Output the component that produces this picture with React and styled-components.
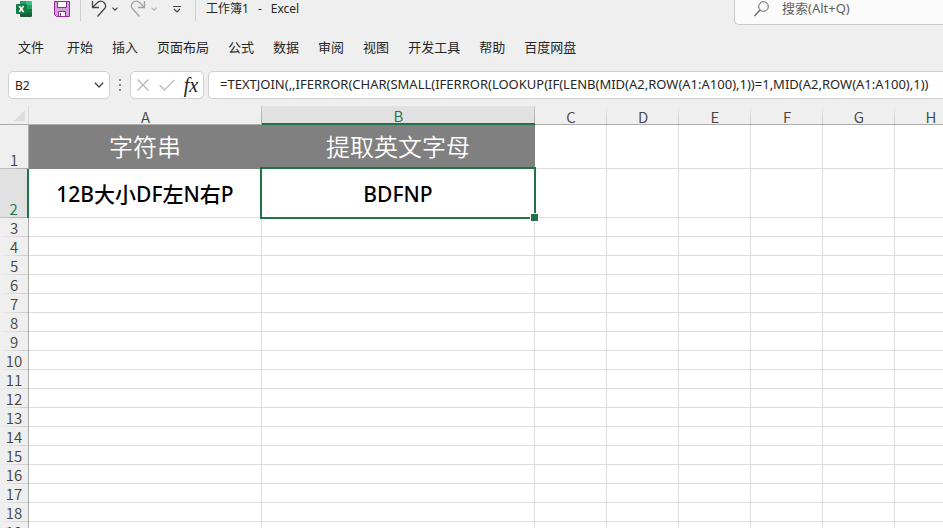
import React, { useState } from "react";
import styled, { createGlobalStyle } from "styled-components";

const GlobalStyle = createGlobalStyle`
  * {
    box-sizing: border-box;
  }
  body {
    margin: 0;
    background: #efefef;
    color: #262626;
    font-family: "Noto Sans", "Noto Sans CJK SC", sans-serif;
    font-size: 13px;
  }
  button,
  input {
    margin: 0;
    padding: 0;
    border: 0;
    background: none;
    color: inherit;
    font: inherit;
    outline: none;
  }
`;

const Page = styled.div`
  display: flex;
  flex-direction: column;
  height: 100vh;
  overflow: hidden;
`;

const TitleBar = styled.header`
  display: flex;
  height: 25px;
  padding-left: 16px;
`;

const QuickAccess = styled.div`
  display: flex;
  align-items: center;
  gap: ${(props) => props.$gap || 0}px;
  height: 18px;
`;

const IconButton = styled.button`
  display: flex;
  align-items: center;
  justify-content: center;
  width: ${(props) => props.$width}px;
  height: 18px;
  color: ${(props) => props.$color || "#444"};
`;

const Divider = styled.span`
  align-self: flex-start;
  width: 1px;
  height: 21px;
  background: #cfcfcf;
`;

const BookTitle = styled.h1`
  display: flex;
  gap: 9px;
  margin: 0 0 0 3px;
  font-size: 12px;
  font-weight: 400;
  line-height: 18px;
  white-space: nowrap;
`;

const Search = styled.label`
  display: flex;
  align-items: flex-start;
  width: 22%;
  min-width: 209px;
  margin-left: auto;
  padding-left: 19px;
  border: 1px solid #c8c8c8;
  border-width: 0 0 1px 1px;
  border-bottom-left-radius: 5px;
  background: #fbfbfb;
  color: #616161;

  & svg {
    margin-top: 1px;
  }
  & input {
    flex: 1;
    min-width: 0;
    height: 16px;
    margin-left: 12px;
  }
  & input::placeholder {
    color: #616161;
    opacity: 1;
  }
`;

const Menu = styled.nav`
  display: flex;
  gap: 19px;
  padding: 12px 18px 0;
  height: 46px;
`;

const MenuItem = styled.button`
  height: 20px;
  line-height: 20px;
  white-space: nowrap;

  &:first-child {
    margin-right: 4px;
  }
`;

const FormulaBar = styled.div`
  display: flex;
  height: 28px;
  padding-left: 8px;
`;

const Box = styled.div`
  display: flex;
  align-items: center;
  border: 1px solid #d0d0d0;
  border-radius: 5px;
  background: #fff;
`;

const NameBox = styled(Box)`
  width: 102px;
  padding: 0 4px 0 6px;

  & input {
    flex: 1;
    min-width: 0;
    font-size: 12px;
  }
`;

const Grip = styled.div`
  display: flex;
  align-items: center;
  justify-content: center;
  width: 20px;
`;

const Actions = styled(Box)`
  width: 74px;
  margin-right: 4px;
`;

const Fx = styled.span`
  font: italic 400 20px/18px "Liberation Serif", serif;
`;

const Formula = styled(Box)`
  flex: 1;
  min-width: 0;
  padding: 0 0 2px 11px;
  border-right: 0;
  border-radius: 5px 0 0 5px;

  & input {
    width: 100%;
  }
`;

const Sheet = styled.main`
  flex: 1;
  min-height: 0;
  margin-top: 7px;
  overflow: hidden;
`;

const Grid = styled.table`
  table-layout: fixed;
  width: 100%;
  border-spacing: 0;
  background: #fff;
`;

const Col = styled.col`
  width: ${(props) => props.$width}px;
`;

const Row = styled.tr`
  height: ${(props) => props.$height}px;
`;

const HeadCell = styled.th`
  padding: 0;
  font-family: "Noto Sans CJK SC", sans-serif;
  font-size: 15px;
  font-weight: 350;
  line-height: 16px;
  text-align: center;
  color: ${(props) => (props.$active ? "#217346" : "#444")};
  background-color: ${(props) => (props.$active ? "#e1e1e1" : "#efefef")};
  background-repeat: no-repeat;
`;

const ColHead = styled(HeadCell)`
  height: 19px;
  padding-top: 2px;
  line-height: 15px;
  background-image: linear-gradient(
    ${(props) => (props.$edge ? "#c4c4c4, #ababab" : "#efefef, #c8c8c8")}
  );
  background-position: right top;
  background-size: 1px 100%;
  border-bottom: ${(props) =>
    props.$active ? "2px solid #217346" : "1px solid #ababab"};
`;

const Corner = styled.td`
  padding: 0 3px 3px 0;
  background: #efefef;
  border-right: 1px solid #d6d6d6;
  border-bottom: 1px solid #ababab;
  line-height: 0;
  text-align: right;
  vertical-align: bottom;
`;

const RowHead = styled(HeadCell)`
  vertical-align: bottom;
  padding-bottom: 1px;
  background-image: linear-gradient(
    to right,
    ${(props) => (props.$edge ? "#c4c4c4, #ababab" : "#efefef, #c8c8c8")}
  );
  background-position: left bottom;
  background-size: 100% 1px;
  border-right: ${(props) =>
    props.$active ? "2px solid #217346" : "1px solid #ababab"};
`;

const Cell = styled.td`
  position: relative;
  padding: 0;
  border-right: 1px solid #dedede;
  border-bottom: 1px solid #dedede;
  text-align: center;
  white-space: nowrap;
`;

const HeadingCell = styled(Cell)`
  padding-bottom: 2px;
  background: #808080;
  border-color: #808080;
  color: #fff;
  font: 350 24px/30px "Noto Sans CJK SC", sans-serif;
`;

const ValueCell = styled(Cell)`
  padding-top: 2px;
  color: #000;
  font: 500 21px/28px "Noto Sans", "Noto Sans CJK SC", sans-serif;
`;

const Selection = styled.div`
  position: absolute;
  z-index: 1;
  top: -2px;
  right: -2px;
  bottom: -2px;
  left: -2px;
  border: 2px solid #217346;

  &::after {
    content: "";
    position: absolute;
    right: -5px;
    bottom: -5px;
    width: 7px;
    height: 7px;
    border: 1px solid #fff;
    background: #217346;
  }
`;

const columns = [
  { name: "A", width: 233 },
  { name: "B", width: 273 },
  { name: "C", width: 72 },
  { name: "D", width: 72 },
  { name: "E", width: 72 },
  { name: "F", width: 72 },
  { name: "G", width: 72 },
  { name: "H", width: 72 },
];

const rows = Array.from({ length: 19 }, (_, i) => i + 1);
const heights = { 1: 44, 2: 49 };

const headings = { A: "字符串", B: "提取英文字母" };
const values = { A: "12B大小DF左N右P", B: "BDFNP" };

const menuItems = [
  "文件",
  "开始",
  "插入",
  "页面布局",
  "公式",
  "数据",
  "审阅",
  "视图",
  "开发工具",
  "帮助",
  "百度网盘",
];

function ExcelLogo() {
  return (
    <svg width="16" height="16" viewBox="0 0 16 16" aria-hidden="true">
      <path d="M4 0h6v4H4z" fill="#21a366" />
      <path d="M10 0h5a1 1 0 0 1 1 1v3h-6z" fill="#33c481" />
      <path d="M4 4h6v4H4z" fill="#107c41" />
      <path d="M10 4h6v4h-6z" fill="#21a366" />
      <path d="M4 8h6v4H4z" fill="#185c37" />
      <path d="M10 8h6v4h-6z" fill="#107c41" />
      <path d="M4 12h12v3a1 1 0 0 1-1 1H5a1 1 0 0 1-1-1z" fill="#185c37" />
      <rect y="3" width="11" height="10" rx="1" fill="#107c41" />
      <path d="M3.2 5l4.4 6M7.6 5l-4.4 6" stroke="#fff" strokeWidth="1.6" />
    </svg>
  );
}

function SaveIcon() {
  return (
    <svg width="16" height="16" viewBox="0 0 16 16" aria-hidden="true">
      <path d="M.5.5h15v15h-13l-2-2z" fill="#d59ddb" stroke="#8f2b9c" />
      <path d="M3.5.5h9v6h-9z" fill="#fff" stroke="#8f2b9c" />
      <path d="M4.5 10.5h7v5h-7z" fill="#fff" stroke="#8f2b9c" />
      <path d="M6.5 12v3" stroke="#8f2b9c" />
    </svg>
  );
}

function UndoIcon({ flip }) {
  return (
    <svg width="16" height="18" viewBox="0 0 16 18" fill="none" aria-hidden="true">
      <g
        transform={flip ? "matrix(-1 0 0 1 16 0)" : undefined}
        stroke="currentColor"
        strokeWidth="1.3"
      >
        <path d="M1.5 1v6.500H8" />
        <path d="M1.500 7.500L6 3c2.200-2.200 5-2.300 7-.5 2 2 2 4.800 0 6.800L6.500 16.500" />
      </g>
    </svg>
  );
}

function Chevron({ size, stroke }) {
  return (
    <svg
      width={size}
      height={size / 2 + 1}
      viewBox="0 0 10 6"
      fill="none"
      aria-hidden="true"
    >
      <path d="M.8.8L5 5 9.200.8" stroke="currentColor" strokeWidth={stroke} />
    </svg>
  );
}

function App() {
  const [name, setName] = useState("B2");
  const [search, setSearch] = useState("");
  const [formula, setFormula] = useState(
    "=TEXTJOIN(,,IFERROR(CHAR(SMALL(IFERROR(LOOKUP(IF(LENB(MID(A2,ROW(A1:A100),1))=1,MID(A2,ROW(A1:A100),1))"
  );

  return (
    <Page>
      <GlobalStyle />
      <TitleBar>
        <QuickAccess $gap={12}>
          <ExcelLogo />
          <IconButton $width={36} aria-label="保存">
            <SaveIcon />
          </IconButton>
        </QuickAccess>
        <QuickAccess $gap={7}>
          <Divider />
          <QuickAccess>
            <IconButton $width={22} aria-label="撤消">
              <UndoIcon />
            </IconButton>
            <IconButton $width={10} aria-label="撤消列表">
              <Chevron size={6} stroke={2} />
            </IconButton>
          </QuickAccess>
          <QuickAccess>
            <IconButton $width={22} $color="#a0a0a0" aria-label="恢复">
              <UndoIcon flip />
            </IconButton>
            <IconButton $width={10} $color="#b4b4b4" aria-label="恢复列表">
              <Chevron size={6} stroke={2} />
            </IconButton>
          </QuickAccess>
          <IconButton $width={22} aria-label="自定义快速访问工具栏">
            <svg width="8" height="8" viewBox="0 0 8 8" fill="none">
              <path
                d="M0 1.500h8M1 4l3 3 3-3"
                stroke="currentColor"
                strokeWidth="1.200"
              />
            </svg>
          </IconButton>
          <Divider />
          <BookTitle>
            <span>工作簿1</span>
            <span>-</span>
            <span>Excel</span>
          </BookTitle>
        </QuickAccess>
        <Search>
          <svg width="16" height="16" viewBox="0 0 16 16" fill="none">
            <circle cx="9.500" cy="5.500" r="4.800" stroke="currentColor" />
            <path d="M6 9l-5.500 6" stroke="currentColor" strokeWidth="1.200" />
          </svg>
          <input
            name="search"
            aria-label="搜索"
            placeholder="搜索(Alt+Q)"
            value={search}
            onChange={(event) => setSearch(event.target.value)}
          />
        </Search>
      </TitleBar>

      <Menu>
        {menuItems.map((item) => (
          <MenuItem key={item}>{item}</MenuItem>
        ))}
      </Menu>

      <FormulaBar>
        <NameBox>
          <input
            name="cell"
            aria-label="名称框"
            value={name}
            onChange={(event) => setName(event.target.value)}
          />
          <IconButton $width={12} aria-label="名称列表">
            <Chevron size={10} stroke={1.3} />
          </IconButton>
        </NameBox>
        <Grip>
          <svg width="2" height="12" viewBox="0 0 2 12" fill="#8a8a8a">
            <path d="M0 0h2v2H0zM0 5h2v2H0zM0 10h2v2H0z" />
          </svg>
        </Grip>
        <Actions>
          <IconButton $width={24} $color="#b4b4b4" aria-label="取消">
            <svg width="12" height="12" viewBox="0 0 12 12" fill="none">
              <path
                d="M.5.5l11 11M11.500.5l-11 11"
                stroke="currentColor"
                strokeWidth="1.200"
              />
            </svg>
          </IconButton>
          <IconButton $width={24} $color="#b4b4b4" aria-label="输入">
            <svg width="16" height="12" viewBox="0 0 16 12" fill="none">
              <path
                d="M.5 6l5 5L15.500.8"
                stroke="currentColor"
                strokeWidth="1.200"
              />
            </svg>
          </IconButton>
          <IconButton $width={24} $color="#222" aria-label="插入函数">
            <Fx>fx</Fx>
          </IconButton>
        </Actions>
        <Formula>
          <input
            name="formula"
            aria-label="编辑栏"
            value={formula}
            onChange={(event) => setFormula(event.target.value)}
          />
        </Formula>
      </FormulaBar>

      <Sheet>
        <Grid>
          <colgroup>
            <Col $width={29} />
            {columns.map((column) => (
              <Col key={column.name} $width={column.width} />
            ))}
          </colgroup>
          <thead>
            <tr>
              <Corner>
                <svg width="11" height="11" viewBox="0 0 11 11" fill="#dcdcdc">
                  <path d="M11 0v11H0z" />
                </svg>
              </Corner>
              {columns.map((column) => (
                <ColHead
                  key={column.name}
                  scope="col"
                  $active={column.name === "B"}
                  $edge={column.name === "A" || column.name === "B"}
                >
                  {column.name}
                </ColHead>
              ))}
            </tr>
          </thead>
          <tbody>
            {rows.map((row) => (
              <Row key={row} $height={heights[row] || 19}>
                <RowHead scope="row" $active={row === 2} $edge={row < 3}>
                  {row}
                </RowHead>
                {columns.map((column) => {
                  if (row === 1 && headings[column.name]) {
                    return (
                      <HeadingCell key={column.name}>
                        {headings[column.name]}
                      </HeadingCell>
                    );
                  }
                  if (row === 2 && values[column.name]) {
                    return (
                      <ValueCell key={column.name}>
                        {values[column.name]}
                        {column.name === "B" && <Selection />}
                      </ValueCell>
                    );
                  }
                  return <Cell key={column.name} />;
                })}
              </Row>
            ))}
          </tbody>
        </Grid>
      </Sheet>
    </Page>
  );
}

export default App;
